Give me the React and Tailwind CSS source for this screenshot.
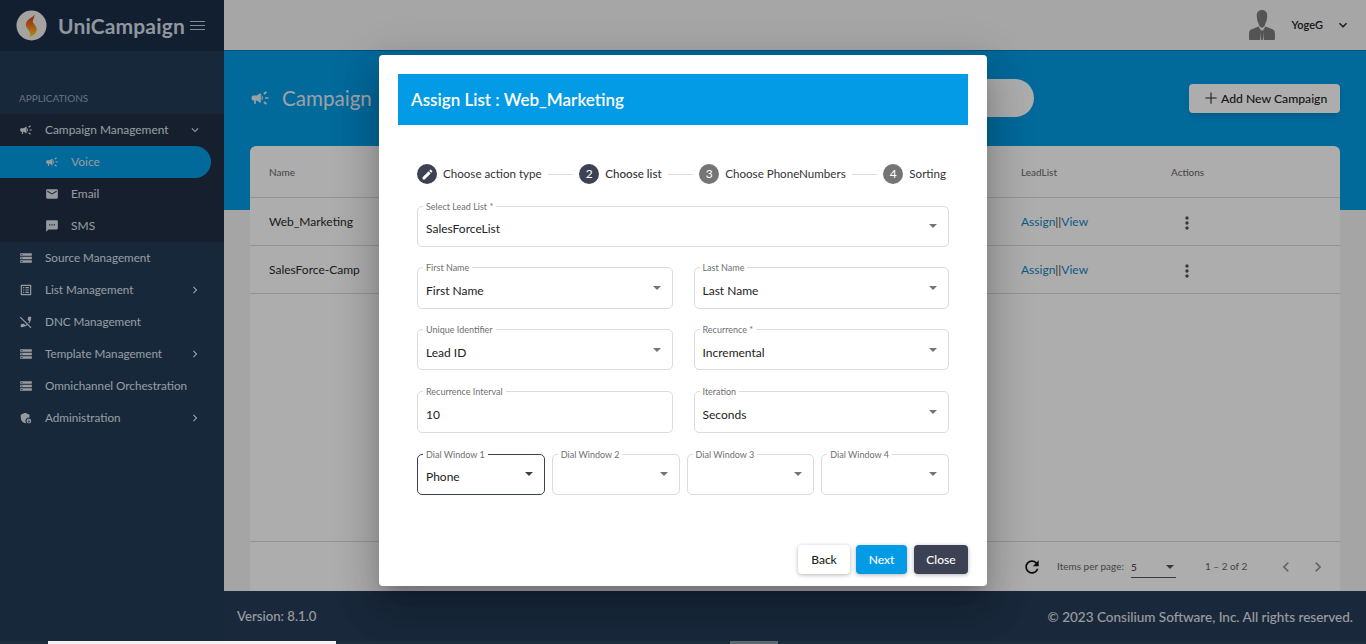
import React from "react";

const P = {
  campaign: "M18 11v2h4v-2h-4zm-2 6.61c.96.71 2.21 1.65 3.2 2.39.4-.53.8-1.07 1.2-1.6-.99-.74-2.24-1.68-3.2-2.4-.4.54-.8 1.08-1.2 1.61zM20.4 5.6c-.4-.53-.8-1.07-1.2-1.6-.99.74-2.24 1.68-3.2 2.4.4.53.8 1.07 1.2 1.6.96-.72 2.21-1.65 3.2-2.4zM4 9c-1.1 0-2 .9-2 2v2c0 1.1.9 2 2 2h1v4h2v-4h1l5 3V6L8 9H4zm11.5 3c0-1.33-.58-2.53-1.5-3.35v6.69c.92-.81 1.5-2.01 1.5-3.34z",
  email: "M20 4H4c-1.1 0-2 .9-2 2v12c0 1.1.9 2 2 2h16c1.1 0 2-.9 2-2V6c0-1.1-.9-2-2-2zm0 4l-8 5-8-5V6l8 5 8-5v2z",
  sms: "M20 2H4c-1.1 0-1.99.9-1.99 2L2 22l4-4h14c1.1 0 2-.9 2-2V4c0-1.1-.9-2-2-2zM9 11H7V9h2v2zm4 0h-2V9h2v2zm4 0h-2V9h2v2z",
  storage: "M2 20h20v-4H2v4zm2-3h2v2H4v-2zM2 4v4h20V4H2zm4 3H4V5h2v2zm-4 7h20v-4H2v4zm2-3h2v2H4v-2z",
  list: "M19 5v14H5V5h14m1.1-2H3.9c-.5 0-.9.4-.9.9v16.2c0 .4.4.9.9.9h16.2c.4 0 .9-.5.9-.9V3.9c0-.5-.5-.9-.9-.9zM11 7h6v2h-6V7zm0 4h6v2h-6v-2zm0 4h6v2h-6zM7 7h2v2H7zm0 4h2v2H7zm0 4h2v2H7z",
  phoneOff: "M17.34 14.54l-1.43-1.43c.56-.73 1.05-1.5 1.47-2.32l-2.2-2.2c-.28-.28-.36-.67-.25-1.02.37-1.12.57-2.32.57-3.57 0-.55.45-1 1-1H20c.55 0 1 .45 1 1 0 3.98-1.37 7.64-3.66 10.54zm-2.82 2.81C11.63 19.64 7.97 21 4 21c-.55 0-1-.45-1-1v-3.49c0-.55.45-1 1-1 1.24 0 2.45-.2 3.57-.57.35-.12.75-.03 1.02.24l2.2 2.2c.81-.42 1.58-.9 2.3-1.46L1.39 4.22l1.42-1.41L21.19 21.2l-1.41 1.41-5.26-5.26z",
  admin: "M17 11c.34 0 .67.04 1 .09V6.27L10.5 3 3 6.27v4.91c0 4.54 3.2 8.79 7.5 9.82.55-.13 1.08-.32 1.6-.55-.69-.98-1.1-2.17-1.1-3.45 0-3.31 2.69-6 6-6zM17 13c-2.21 0-4 1.79-4 4s1.79 4 4 4 4-1.79 4-4-1.79-4-4-4zm0 1.38c.62 0 1.12.51 1.12 1.12s-.51 1.12-1.12 1.12-1.12-.51-1.12-1.12.5-1.12 1.12-1.12zm0 5.37c-.93 0-1.74-.46-2.24-1.17.05-.72 1.51-1.08 2.24-1.08s2.19.36 2.24 1.08c-.5.71-1.31 1.17-2.24 1.17z",
  edit: "M3 17.25V21h3.75L17.81 9.94l-3.75-3.75L3 17.25zM20.71 7.04c.39-.39.39-1.02 0-1.41l-2.34-2.34c-.39-.39-1.02-.39-1.41 0l-1.83 1.83 3.75 3.75 1.83-1.83z",
  refresh: "M17.65 6.35C16.2 4.9 14.21 4 12 4c-4.42 0-7.99 3.58-7.99 8s3.57 8 7.99 8c3.73 0 6.84-2.55 7.73-6h-2.08c-.82 2.33-3.04 4-5.65 4-3.31 0-6-2.69-6-6s2.69-6 6-6c1.66 0 3.14.69 4.22 1.78L13 11h7V4l-2.35 2.35z",
  dots: "M12 8c1.1 0 2-.9 2-2s-.9-2-2-2-2 .9-2 2 .9 2 2 2zm0 2c-1.1 0-2 .9-2 2s.9 2 2 2 2-.9 2-2-.9-2-2-2zm0 6c-1.1 0-2 .9-2 2s.9 2 2 2 2-.9 2-2-.9-2-2-2z",
  down: "M7.41 8.59 12 13.17l4.59-4.58L18 10l-6 6-6-6z",
  right: "M8.59 16.59 13.17 12 8.59 7.41 10 6l6 6-6 6z",
  left: "M15.41 7.41 14 6l-6 6 6 6 1.41-1.41L10.83 12z",
  plus: "M19.5 12.7h-6.8v6.8h-1.4v-6.8H4.5v-1.4h6.8V4.5h1.4v6.8h6.8z",
};

function Icon({ d, className }) {
  return (
    <svg viewBox="0 0 24 24" fill="currentColor" className={className}>
      <path d={d} />
    </svg>
  );
}

const navTop = [
  { label: "Source Management", icon: P.storage },
  { label: "List Management", icon: P.list, arrow: true },
  { label: "DNC Management", icon: P.phoneOff },
  { label: "Template Management", icon: P.storage, arrow: true },
  { label: "Omnichannel Orchestration", icon: P.storage },
  { label: "Administration", icon: P.admin, arrow: true },
];

function NavItem({ label, icon, arrow }) {
  return (
    <div className="flex items-center h-8 pl-[19px] pr-[22px] text-[11.7px] text-[#dfe5eb]">
      <Icon d={icon} className="w-[14px] h-[14px] mr-[12px]" />
      <span className="flex-1">{label}</span>
      {arrow && <Icon d={P.right} className="w-[14px] h-[14px]" />}
    </div>
  );
}

function Sidebar() {
  return (
    <aside className="w-[224px] shrink-0 bg-[#233b58] flex flex-col">
      <div className="h-[51px] bg-[#1b2e47] flex items-center pl-[16px]">
        <svg viewBox="0 0 32 32" className="w-[31px] h-[31px] shrink-0">
          <defs>
            <linearGradient id="flame" x1="0" y1="0" x2="0" y2="1">
              <stop offset="0" stopColor="#d12a1c" />
              <stop offset="0.5" stopColor="#ee7a1c" />
              <stop offset="1" stopColor="#fbd916" />
            </linearGradient>
          </defs>
          <circle cx="16" cy="16" r="15.5" fill="#f4f1ec" />
          <path d="M19.5 4c-1 2.6-4.2 3.6-6.8 6-2.2 2-3.2 4.4-2.2 7 .9 2.4 3.6 4.4 4.1 7 .2 1.2 0 2.6-.6 4.2 3.6-1.4 7.2-4.2 7.4-8 .2-3-2.6-4.8-3.8-7.2-.8-1.6.4-3 1.9-9z" fill="url(#flame)" />
        </svg>
        <span className="ml-[11px] text-[21px] font-bold text-[#d3dde8] tracking-[0.15px]">UniCampaign</span>
        <div className="ml-[5px] flex flex-col gap-[2.5px]">
          <span className="block w-[15px] h-[1.5px] bg-[#c4cdd6]" />
          <span className="block w-[15px] h-[1.5px] bg-[#c4cdd6]" />
          <span className="block w-[15px] h-[1.5px] bg-[#c4cdd6]" />
        </div>
      </div>
      <div className="h-[63px] flex items-end pb-[8px] pl-[19px] text-[10px] text-[#9aa8b8]">APPLICATIONS</div>
      <div className="bg-[#1f2f45]">
        <div className="flex items-center h-8 pl-[19px] pr-[22px] text-[11.9px] text-[#dfe5eb]">
          <Icon d={P.campaign} className="w-[14px] h-[14px] mr-[12px]" />
          <span className="flex-1">Campaign Management</span>
          <Icon d={P.down} className="w-[14px] h-[14px]" />
        </div>
        <div className="flex items-center h-8 w-[211px] pl-[45px] rounded-r-full bg-[#039be5] text-[12px] text-[#dfe5eb]">
          <Icon d={P.campaign} className="w-[14px] h-[14px] mr-[12px]" />
          Voice
        </div>
        <div className="flex items-center h-8 pl-[45px] text-[12px] text-[#dfe5eb]">
          <Icon d={P.email} className="w-[14px] h-[14px] mr-[12px]" />
          Email
        </div>
        <div className="flex items-center h-8 pl-[45px] text-[12px] text-[#dfe5eb]">
          <Icon d={P.sms} className="w-[14px] h-[14px] mr-[12px]" />
          SMS
        </div>
      </div>
      {navTop.map((n) => (
        <NavItem key={n.label} {...n} />
      ))}
    </aside>
  );
}

function Avatar() {
  return (
    <svg viewBox="0 0 26 31" className="w-[26px] h-[31px]">
      <path d="M13 0c3.6 0 5.4 2.4 5.2 6 0 2-.3 4.4-1.3 6.4-.7 1.4-1.2 2.6-1.2 3.6L13 18l-2.7-2c0-1-.5-2.2-1.2-3.6-1-2-1.3-4.4-1.3-6.4C7.6 2.4 9.4 0 13 0z" fill="#7d7d7d" />
      <path d="M9.6 16.4 2 19.4C.6 20 0 22 0 24v4.5c0 1 .6 1.5 1.6 1.5h9.6l.8-9.5zM16.4 16.4l7.6 3c1.4.6 2 2.6 2 4.6v4.5c0 1-.6 1.5-1.6 1.5h-9.6l-.8-9.5z" fill="#7d7d7d" />
      <path d="M12 20.5h2l.4 2-.6 7.5h-1.6l-.6-7.5z" fill="#7d7d7d" />
    </svg>
  );
}

function CampaignRow({ name }) {
  return (
    <div className="flex items-center h-[48px] pl-[19px] border-b border-[#d9d9d9] text-[12px]">
      <span className="w-[752px] text-[#2b2b2b]">{name}</span>
      <span className="w-[150px] text-[#0f87c4]">
        Assign<span className="text-[#444]">||</span>View
      </span>
      <Icon d={P.dots} className="w-[20px] h-[20px] ml-[6px] mt-[2px] text-[#555]" />
    </div>
  );
}

function Main() {
  return (
    <div className="flex-1 min-w-0 flex flex-col bg-[#f4f4f4]">
      <header className="h-[51px] shrink-0 bg-[#f5f5f5] border-b border-[#0277b0] flex items-center justify-end pl-[26px]">
        <Avatar />
        <span className="ml-[16px] text-[11px] font-semibold text-[#222]">YogeG</span>
        <Icon d={P.down} className="w-[16px] h-[16px] ml-[12px] mr-[15px] text-[#222]" />
      </header>
      <div className="h-[159px] shrink-0 bg-[#039be5] px-[26px] pt-[28px]">
        <div className="flex items-center h-[38px]">
          <Icon d={P.campaign} className="w-[20px] h-[20px] text-[#e6eef5]" />
          <span className="ml-[12px] text-[20.6px] text-[#e6eef5]">Campaign</span>
          <div className="ml-auto mr-[155px] w-[500px] h-[38px] rounded-full bg-white" />
          <button className="w-[151px] h-[29px] pl-[13px] rounded-[4px] bg-white shadow-md flex items-center text-[12.2px] font-medium text-[#222]">
            <Icon d={P.plus} className="w-[18px] h-[18px] mr-[1px]" />
            <span className="pt-[3px]">Add New Campaign</span>
          </button>
        </div>
      </div>
      <div className="flex-1 -mt-[64px] mx-[26px] bg-white rounded-t-[6px] flex flex-col">
        <div className="flex items-center h-[52px] pl-[19px] pt-[1px] border-b border-[#d9d9d9] text-[10px] text-[#666]">
          <span className="w-[752px]">Name</span>
          <span className="w-[150px]">LeadList</span>
          <span>Actions</span>
        </div>
        <CampaignRow name="Web_Marketing" />
        <CampaignRow name="SalesForce-Camp" />
        <div className="flex-1" />
        <div className="h-[50px] shrink-0 border-t border-[#d9d9d9] flex items-center text-[10px] text-[#666]">
          <Icon d={P.refresh} className="w-[20px] h-[20px] ml-[772px] text-[#111]" />
          <span className="ml-[15px]">Items per page:</span>
          <div className="ml-[7px] w-[45px] h-[20px] border-b border-[#555] relative top-[1px] flex items-center justify-between text-[#333]">
            <span>5</span>
            <span className="mr-[2px] w-0 h-0 border-x-[4.5px] border-x-transparent border-t-[4.5px] border-t-[#555]" />
          </div>
          <span className="ml-[29px]">1 – 2 of 2</span>
          <Icon d={P.left} className="w-[20px] h-[20px] ml-[29px] text-[#999]" />
          <Icon d={P.right} className="w-[20px] h-[20px] ml-[12px] text-[#999]" />
        </div>
      </div>
      <footer className="h-[50px] shrink-0 bg-[#263b58] flex items-center justify-between px-[13px] pt-[2px] font-medium text-[#e0e4e8]">
        <span className="text-[13.2px]">Version: 8.1.0</span>
        <span className="text-[13.5px]">© 2023 Consilium Software, Inc. All rights reserved.</span>
      </footer>
    </div>
  );
}

function Field({ label, value, h = "h-[41px]", pt = "pt-[5px]", focus, noArrow }) {
  const border = focus ? "border-[#3c4254]" : "border-[#dcdcdc]";
  return (
    <div className={`relative ${h} rounded-[5px] border ${border} flex items-center pl-[8px] pr-[11px] ${pt}`}>
      <span className="absolute left-[5px] -top-[6px] bg-white px-[3px] text-[9px] leading-[11px] text-[#6f6f6f] whitespace-nowrap">
        {label}
      </span>
      <span className="flex-1 text-[12px] text-[#222]">{value}</span>
      {!noArrow && (
        <span className={`relative -top-[3px] w-0 h-0 border-x-[4.5px] border-x-transparent border-t-[4.5px] ${focus ? "border-t-[#3c4254]" : "border-t-[#757575]"}`} />
      )}
    </div>
  );
}

function Step({ n, label, done, active }) {
  const bg = done || active ? "bg-[#3c4254]" : "bg-[#757575]";
  return (
    <div className="flex items-center shrink-0">
      <span className={`w-[20px] h-[20px] rounded-full ${bg} text-white text-[12px] flex items-center justify-center`}>
        {done ? <Icon d={P.edit} className="w-[13px] h-[13px]" /> : n}
      </span>
      <span className={`ml-[6px] text-[11.6px] text-[#333] ${active ? "font-medium" : ""}`}>{label}</span>
    </div>
  );
}

function Line() {
  return <span className="flex-1 h-px bg-[#dcdcdc] mx-[6px]" />;
}

function Dialog() {
  return (
    <div className="w-[608px] h-[531px] bg-white rounded-[4px] p-[19px] pb-[12px] flex flex-col shadow-[0_11px_15px_-7px_rgba(0,0,0,0.2),0_24px_38px_3px_rgba(0,0,0,0.14),0_9px_46px_8px_rgba(0,0,0,0.12)]">
      <div className="h-[51px] shrink-0 bg-[#039be5] flex items-center pl-[13px] text-[17px] font-semibold text-white">
        Assign List : Web_Marketing
      </div>
      <div className="px-[19px]">
        <div className="flex items-center mt-[39px] h-[20px] pr-[3px]">
          <Step done label="Choose action type" />
          <Line />
          <Step n="2" active label="Choose list" />
          <Line />
          <Step n="3" label="Choose PhoneNumbers" />
          <Line />
          <Step n="4" label="Sorting" />
        </div>
        <div className="mt-[22px]">
          <Field label="Select Lead List *" value="SalesForceList" />
        </div>
        <div className="mt-[20px] grid grid-cols-2 gap-x-[21px]">
          <Field label="First Name" value="First Name" h="h-[42px]" />
          <Field label="Last Name" value="Last Name" h="h-[42px]" />
        </div>
        <div className="mt-[20px] grid grid-cols-2 gap-x-[21px]">
          <Field label="Unique Identifier" value="Lead ID" pt="pt-[7px]" />
          <Field label="Recurrence *" value="Incremental" pt="pt-[7px]" />
        </div>
        <div className="mt-[21px] grid grid-cols-2 gap-x-[21px]">
          <Field label="Recurrence Interval" value="10" h="h-[42px]" noArrow />
          <Field label="Iteration" value="Seconds" h="h-[42px]" />
        </div>
        <div className="mt-[21px] grid grid-cols-4 gap-x-[7px]">
          <Field label="Dial Window 1" value="Phone" focus />
          <Field label="Dial Window 2" value="" />
          <Field label="Dial Window 3" value="" />
          <Field label="Dial Window 4" value="" />
        </div>
      </div>
      <div className="mt-auto flex justify-end gap-[6px] text-[12px] font-medium">
        <button className="w-[52px] h-[29px] rounded-[4px] bg-white text-[#222] shadow-[0_1px_4px_rgba(0,0,0,0.3)]">Back</button>
        <button className="w-[51px] h-[29px] rounded-[4px] bg-[#039be5] text-white shadow-[0_1px_4px_rgba(0,0,0,0.3)]">Next</button>
        <button className="w-[54px] h-[29px] ml-px rounded-[4px] bg-[#3c4254] text-white shadow-[0_1px_4px_rgba(0,0,0,0.3)]">Close</button>
      </div>
    </div>
  );
}

export default function App() {
  return (
    <div className="relative w-[1366px] h-[644px] overflow-hidden flex flex-col font-[Lato,sans-serif]">
      <div className="h-[641px] flex">
        <Sidebar />
        <Main />
      </div>
      <div className="h-[3px] bg-[#1c2f3c] flex">
        <span className="ml-[48px] w-[288px] bg-[#f2f2f2]" />
        <span className="ml-[394px] w-[48px] bg-[#5c6a72]" />
      </div>
      <div className="absolute inset-x-0 top-0 h-[641px] bg-black/32 flex items-center justify-center">
        <Dialog />
      </div>
    </div>
  );
}
